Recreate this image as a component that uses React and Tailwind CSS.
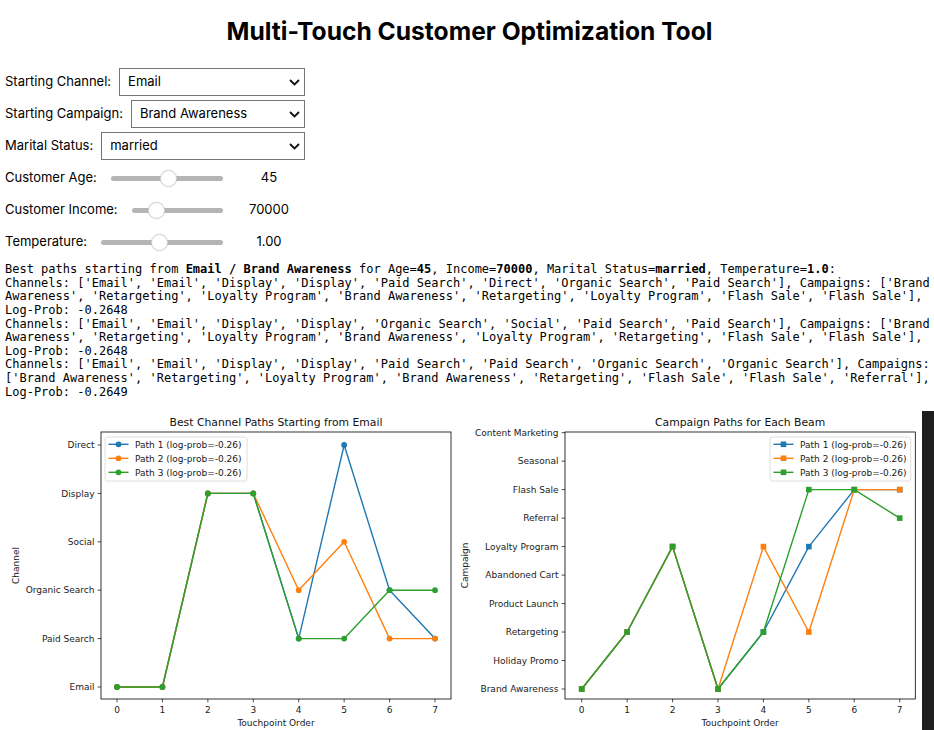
import React, { useState } from "react";

const CHANNELS = ["Email", "Paid Search", "Organic Search", "Social", "Display", "Direct"];
const CAMPAIGNS = [
  "Brand Awareness",
  "Holiday Promo",
  "Retargeting",
  "Product Launch",
  "Abandoned Cart",
  "Loyalty Program",
  "Referral",
  "Flash Sale",
  "Seasonal",
  "Content Marketing",
];
const COLORS = ["#1f77b4", "#ff7f0e", "#2ca02c"];
const MPL_FONT = "'DejaVu Sans', 'Liberation Sans', sans-serif";

function SelectRow({ label, value, options, onChange }) {
  return (
    <div className="flex h-8 w-[300px] items-center gap-2">
      <label className="whitespace-nowrap">{label}</label>
      <div className="relative flex-1">
        <select
          value={value}
          onChange={(e) => onChange(e.target.value)}
          className="h-[28px] w-full appearance-none border border-[#767676] bg-white pl-2 text-[13px] text-black outline-none"
        >
          {options.map((o) => (
            <option key={o}>{o}</option>
          ))}
        </select>
        <svg
          className="pointer-events-none absolute right-[5px] top-[11px]"
          width="11"
          height="7"
          viewBox="0 0 11 7"
        >
          <path d="M1 1l4.5 4.5L10 1" fill="none" stroke="#111" strokeWidth="1.8" />
        </svg>
      </div>
    </div>
  );
}

function SliderRow({ label, min, max, step, value, onChange, shown }) {
  return (
    <div className="flex h-8 w-[300px] items-center">
      <label className="whitespace-nowrap">{label}</label>
      <input
        type="range"
        min={min}
        max={max}
        step={step}
        value={value}
        onChange={(e) => onChange(Number(e.target.value))}
        className="ml-[14px] h-4 min-w-0 flex-1 appearance-none bg-transparent [&::-webkit-slider-runnable-track]:h-[5px] [&::-webkit-slider-runnable-track]:rounded-full [&::-webkit-slider-runnable-track]:bg-[#b5b5b5] [&::-webkit-slider-thumb]:mt-[-6px] [&::-webkit-slider-thumb]:h-[17px] [&::-webkit-slider-thumb]:w-[17px] [&::-webkit-slider-thumb]:appearance-none [&::-webkit-slider-thumb]:rounded-full [&::-webkit-slider-thumb]:border [&::-webkit-slider-thumb]:border-[#d2d2d2] [&::-webkit-slider-thumb]:bg-white [&::-webkit-slider-thumb]:shadow-[0_0_1px_rgba(0,0,0,0.15)]"
      />
      <span className="ml-[10px] w-[72px] text-center">{shown}</span>
    </div>
  );
}

function Marker({ shape, x, y, color }) {
  if (shape === "s") {
    return <rect x={x - 2.8} y={y - 2.8} width="5.6" height="5.6" fill={color} />;
  }
  return <circle cx={x} cy={y} r="2.9" fill={color} />;
}

function Chart({ width, frame, x0, y0, dy, labels, paths, shape, title, ylabel, ylabelX, legendX, legendW }) {
  const xAt = (i) => x0 + 45.43 * i;
  const yAt = (j) => y0 - dy * j;
  const midX = (frame.x0 + frame.x1) / 2;
  const midY = (frame.y0 + frame.y1) / 2;
  return (
    <svg width={width} height="325" className="block shrink-0" fontFamily={MPL_FONT}>
      <text x={midX} y="21" fontSize="10.8" textAnchor="middle" fill="#111">
        {title}
      </text>
      {labels.map((l, j) => (
        <g key={l}>
          <line x1={frame.x0 - 3.3} x2={frame.x0} y1={yAt(j)} y2={yAt(j)} stroke="#000" strokeWidth="0.7" />
          <text x={frame.x0 - 6.5} y={yAt(j) + 3.2} fontSize="9" textAnchor="end" fill="#1a1a1a">
            {l}
          </text>
        </g>
      ))}
      {Array.from({ length: 8 }, (_, i) => (
        <g key={i}>
          <line x1={xAt(i)} x2={xAt(i)} y1={frame.y1} y2={frame.y1 + 3.3} stroke="#000" strokeWidth="0.7" />
          <text x={xAt(i)} y={frame.y1 + 13.5} fontSize="9" textAnchor="middle" fill="#1a1a1a">
            {i}
          </text>
        </g>
      ))}
      <text x={midX} y="320.5" fontSize="9" textAnchor="middle" fill="#1a1a1a">
        Touchpoint Order
      </text>
      <text
        x={ylabelX}
        y={midY}
        fontSize="9"
        textAnchor="middle"
        fill="#1a1a1a"
        transform={`rotate(-90 ${ylabelX} ${midY})`}
      >
        {ylabel}
      </text>
      {paths.map((p, k) => (
        <g key={k}>
          <polyline
            points={p.map((v, i) => `${xAt(i)},${yAt(v)}`).join(" ")}
            fill="none"
            stroke={COLORS[k]}
            strokeWidth="1.4"
            strokeLinejoin="round"
          />
          {p.map((v, i) => (
            <Marker key={i} shape={shape} x={xAt(i)} y={yAt(v)} color={COLORS[k]} />
          ))}
        </g>
      ))}
      <rect
        x={frame.x0}
        y={frame.y0}
        width={frame.x1 - frame.x0}
        height={frame.y1 - frame.y0}
        fill="none"
        stroke="#000"
        strokeWidth="0.8"
      />
      <rect x={legendX} y="32" width={legendW} height="44" rx="2" fill="#fff" fillOpacity="0.8" stroke="#d5d5d5" strokeWidth="0.8" />
      {COLORS.map((c, k) => {
        const y = 39.3 + 14 * k;
        return (
          <g key={c}>
            <line x1={legendX + 3.5} x2={legendX + 23.5} y1={y} y2={y} stroke={c} strokeWidth="1.4" />
            <Marker shape={shape} x={legendX + 13.5} y={y} color={c} />
            <text x={legendX + 30} y={y + 3.2} fontSize="9" fill="#1a1a1a">
              {`Path ${k + 1} (log-prob=-0.26)`}
            </text>
          </g>
        );
      })}
    </svg>
  );
}

export default function App() {
  const [channel, setChannel] = useState("Email");
  const [campaign, setCampaign] = useState("Brand Awareness");
  const [marital, setMarital] = useState("married");
  const [age, setAge] = useState(45);
  const [income, setIncome] = useState(70000);
  const [temp, setTemp] = useState(1.0);

  return (
    <div className="min-h-[730px] bg-white pl-[5px] font-['Inter','Noto_Sans',sans-serif] text-[13px] text-black">
      <h1 className="pt-4 text-center text-[24.6px] font-bold leading-[30px]">
        Multi-Touch Customer Optimization Tool
      </h1>

      <div className="mt-5 flex flex-col">
        <SelectRow label="Starting Channel:" value={channel} options={CHANNELS} onChange={setChannel} />
        <SelectRow label="Starting Campaign:" value={campaign} options={CAMPAIGNS} onChange={setCampaign} />
        <SelectRow
          label="Marital Status:"
          value={marital}
          options={["married", "single", "divorced"]}
          onChange={setMarital}
        />
        <SliderRow label="Customer Age:" min={18} max={70} step={1} value={age} onChange={setAge} shown={age} />
        <SliderRow
          label="Customer Income:"
          min={20000}
          max={250000}
          step={1000}
          value={income}
          onChange={setIncome}
          shown={income}
        />
        <SliderRow
          label="Temperature:"
          min={0.1}
          max={2}
          step={0.05}
          value={temp}
          onChange={setTemp}
          shown={temp.toFixed(2)}
        />
      </div>

      <pre className="mt-[5px] whitespace-pre-wrap font-['DejaVu_Sans_Mono','Liberation_Mono',monospace] text-[12px] leading-[13.63px]">
        Best paths starting from <b>Email / Brand Awareness</b> for Age=<b>45</b>, Income=<b>70000</b>, Marital
        Status=<b>married</b>, Temperature=<b>1.0</b>:{"\n"}
        {"Channels: ['Email', 'Email', 'Display', 'Display', 'Paid Search', 'Direct', 'Organic Search', 'Paid Search'], Campaigns: ['Brand Awareness', 'Retargeting', 'Loyalty Program', 'Brand Awareness', 'Retargeting', 'Loyalty Program', 'Flash Sale', 'Flash Sale'], Log-Prob: -0.2648\n"}
        {"Channels: ['Email', 'Email', 'Display', 'Display', 'Organic Search', 'Social', 'Paid Search', 'Paid Search'], Campaigns: ['Brand Awareness', 'Retargeting', 'Loyalty Program', 'Brand Awareness', 'Loyalty Program', 'Retargeting', 'Flash Sale', 'Flash Sale'], Log-Prob: -0.2648\n"}
        {"Channels: ['Email', 'Email', 'Display', 'Display', 'Paid Search', 'Paid Search', 'Organic Search', 'Organic Search'], Campaigns: ['Brand Awareness', 'Retargeting', 'Loyalty Program', 'Brand Awareness', 'Retargeting', 'Flash Sale', 'Flash Sale', 'Referral'], Log-Prob: -0.2649"}
      </pre>

      <div className="-ml-[5px] mt-[6px] flex items-start">
        <Chart
          width={455}
          frame={{ x0: 101, x1: 451, y0: 27, y1: 294 }}
          x0={117}
          y0={282}
          dy={48.4}
          labels={CHANNELS}
          paths={[
            [0, 0, 4, 4, 1, 5, 2, 1],
            [0, 0, 4, 4, 2, 3, 1, 1],
            [0, 0, 4, 4, 1, 1, 2, 2],
          ]}
          shape="o"
          title="Best Channel Paths Starting from Email"
          ylabel="Channel"
          ylabelX={19}
          legendX={105}
          legendW={142}
        />
        <Chart
          width={467}
          frame={{ x0: 110, x1: 460.3, y0: 27, y1: 294 }}
          x0={126.7}
          y0={284}
          dy={28.48}
          labels={CAMPAIGNS}
          paths={[
            [0, 2, 5, 0, 2, 5, 7, 7],
            [0, 2, 5, 0, 5, 2, 7, 7],
            [0, 2, 5, 0, 2, 7, 7, 6],
          ]}
          shape="s"
          title="Campaign Paths for Each Beam"
          ylabel="Campaign"
          ylabelX={13}
          legendX={315}
          legendW={140.7}
        />
        <div className="mt-[6px] h-[319px] w-[12px] shrink-0 bg-[#1e1e1e]" />
      </div>
    </div>
  );
}
